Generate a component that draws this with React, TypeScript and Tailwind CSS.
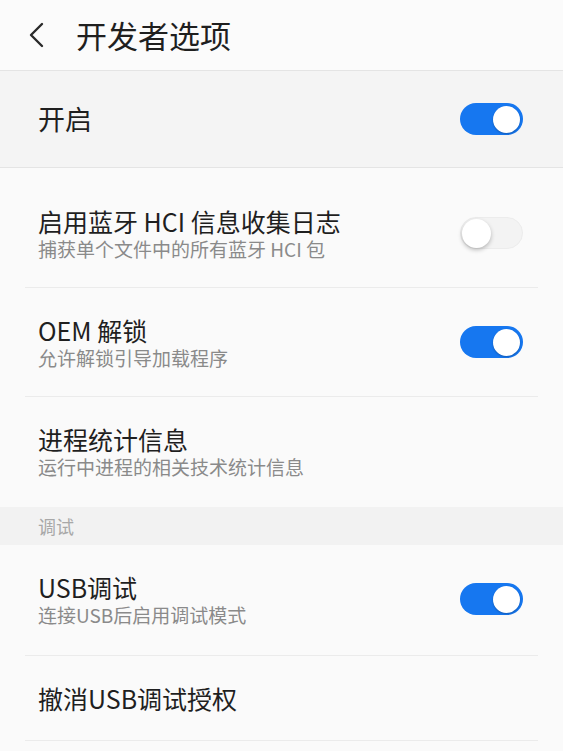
import React from "react";

function Toggle({ on }: { on: boolean }) {
  if (on) {
    return (
      <div className="flex h-[32px] w-[63px] shrink-0 items-center justify-end rounded-full bg-[#1677f0] pr-[3px]">
        <div className="h-[27px] w-[27px] rounded-full bg-white shadow-[0_1px_2px_rgba(0,0,0,0.25)]" />
      </div>
    );
  }
  return (
    <div className="flex h-[32px] w-[63px] shrink-0 items-center justify-start rounded-full border border-[#ececec] bg-[#f3f3f3] pl-[1px]">
      <div className="h-[29px] w-[29px] rounded-full bg-white shadow-[0_2px_4px_rgba(0,0,0,0.25)]" />
    </div>
  );
}

function Item({
  title,
  subtitle,
  toggle,
  divider = true,
  extra = "",
}: {
  title: string;
  subtitle?: string;
  toggle?: boolean;
  divider?: boolean;
  extra?: string;
}) {
  return (
    <div>
      <div className={`flex items-center justify-between pl-[38px] pr-[40px] py-[26px] ${extra}`}>
        <div className="flex flex-col">
          <div className="text-[25px] leading-[32px] text-[#1f1f1f]">{title}</div>
          {subtitle && (
            <div className="text-[19px] leading-[24px] text-[#8a8a8a]">{subtitle}</div>
          )}
        </div>
        {toggle !== undefined && <Toggle on={toggle} />}
      </div>
      {divider && <div className="mx-[25px] h-px bg-[#ebebeb]" />}
    </div>
  );
}

export default function App() {
  return (
    <div
      className="h-[751px] w-[563px] overflow-hidden bg-[#fafafa]"
      style={{ fontFamily: '"Noto Sans CJK SC", "Noto Sans", sans-serif' }}
    >
      <div className="flex h-[70px] items-center bg-[#fbfbfb] pl-[28px]">
        <svg width="17" height="26" viewBox="0 0 17 26" fill="none">
          <polyline
            points="14,2 3,13 14,24"
            stroke="#2a2a2a"
            strokeWidth="2.4"
            strokeLinecap="round"
            strokeLinejoin="round"
          />
        </svg>
        <div className="ml-[31px] text-[31px] leading-[36px] text-[#1f1f1f]">开发者选项</div>
      </div>
      <div className="flex h-[98px] items-center justify-between border-y border-[#e4e4e4] bg-[#f4f4f4] pl-[38px] pr-[40px]">
        <div className="text-[27px] leading-[34px] text-[#1f1f1f]">开启</div>
        <Toggle on={true} />
      </div>
      <div className="pt-[11px] pb-[2px]">
        <Item title="启用蓝牙 HCI 信息收集日志" subtitle="捕获单个文件中的所有蓝牙 HCI 包" toggle={false} />
        <Item title="OEM 解锁" subtitle="允许解锁引导加载程序" toggle={true} />
        <Item title="进程统计信息" subtitle="运行中进程的相关技术统计信息" divider={false} />
      </div>
      <div className="flex h-[38px] items-center bg-[#f2f2f2] pl-[38px] text-[18px] text-[#a8a8a8]">
        调试
      </div>
      <Item title="USB调试" subtitle="连接USB后启用调试模式" toggle={true} extra="pb-[28px]" />
      <Item title="撤消USB调试授权" />
    </div>
  );
}
